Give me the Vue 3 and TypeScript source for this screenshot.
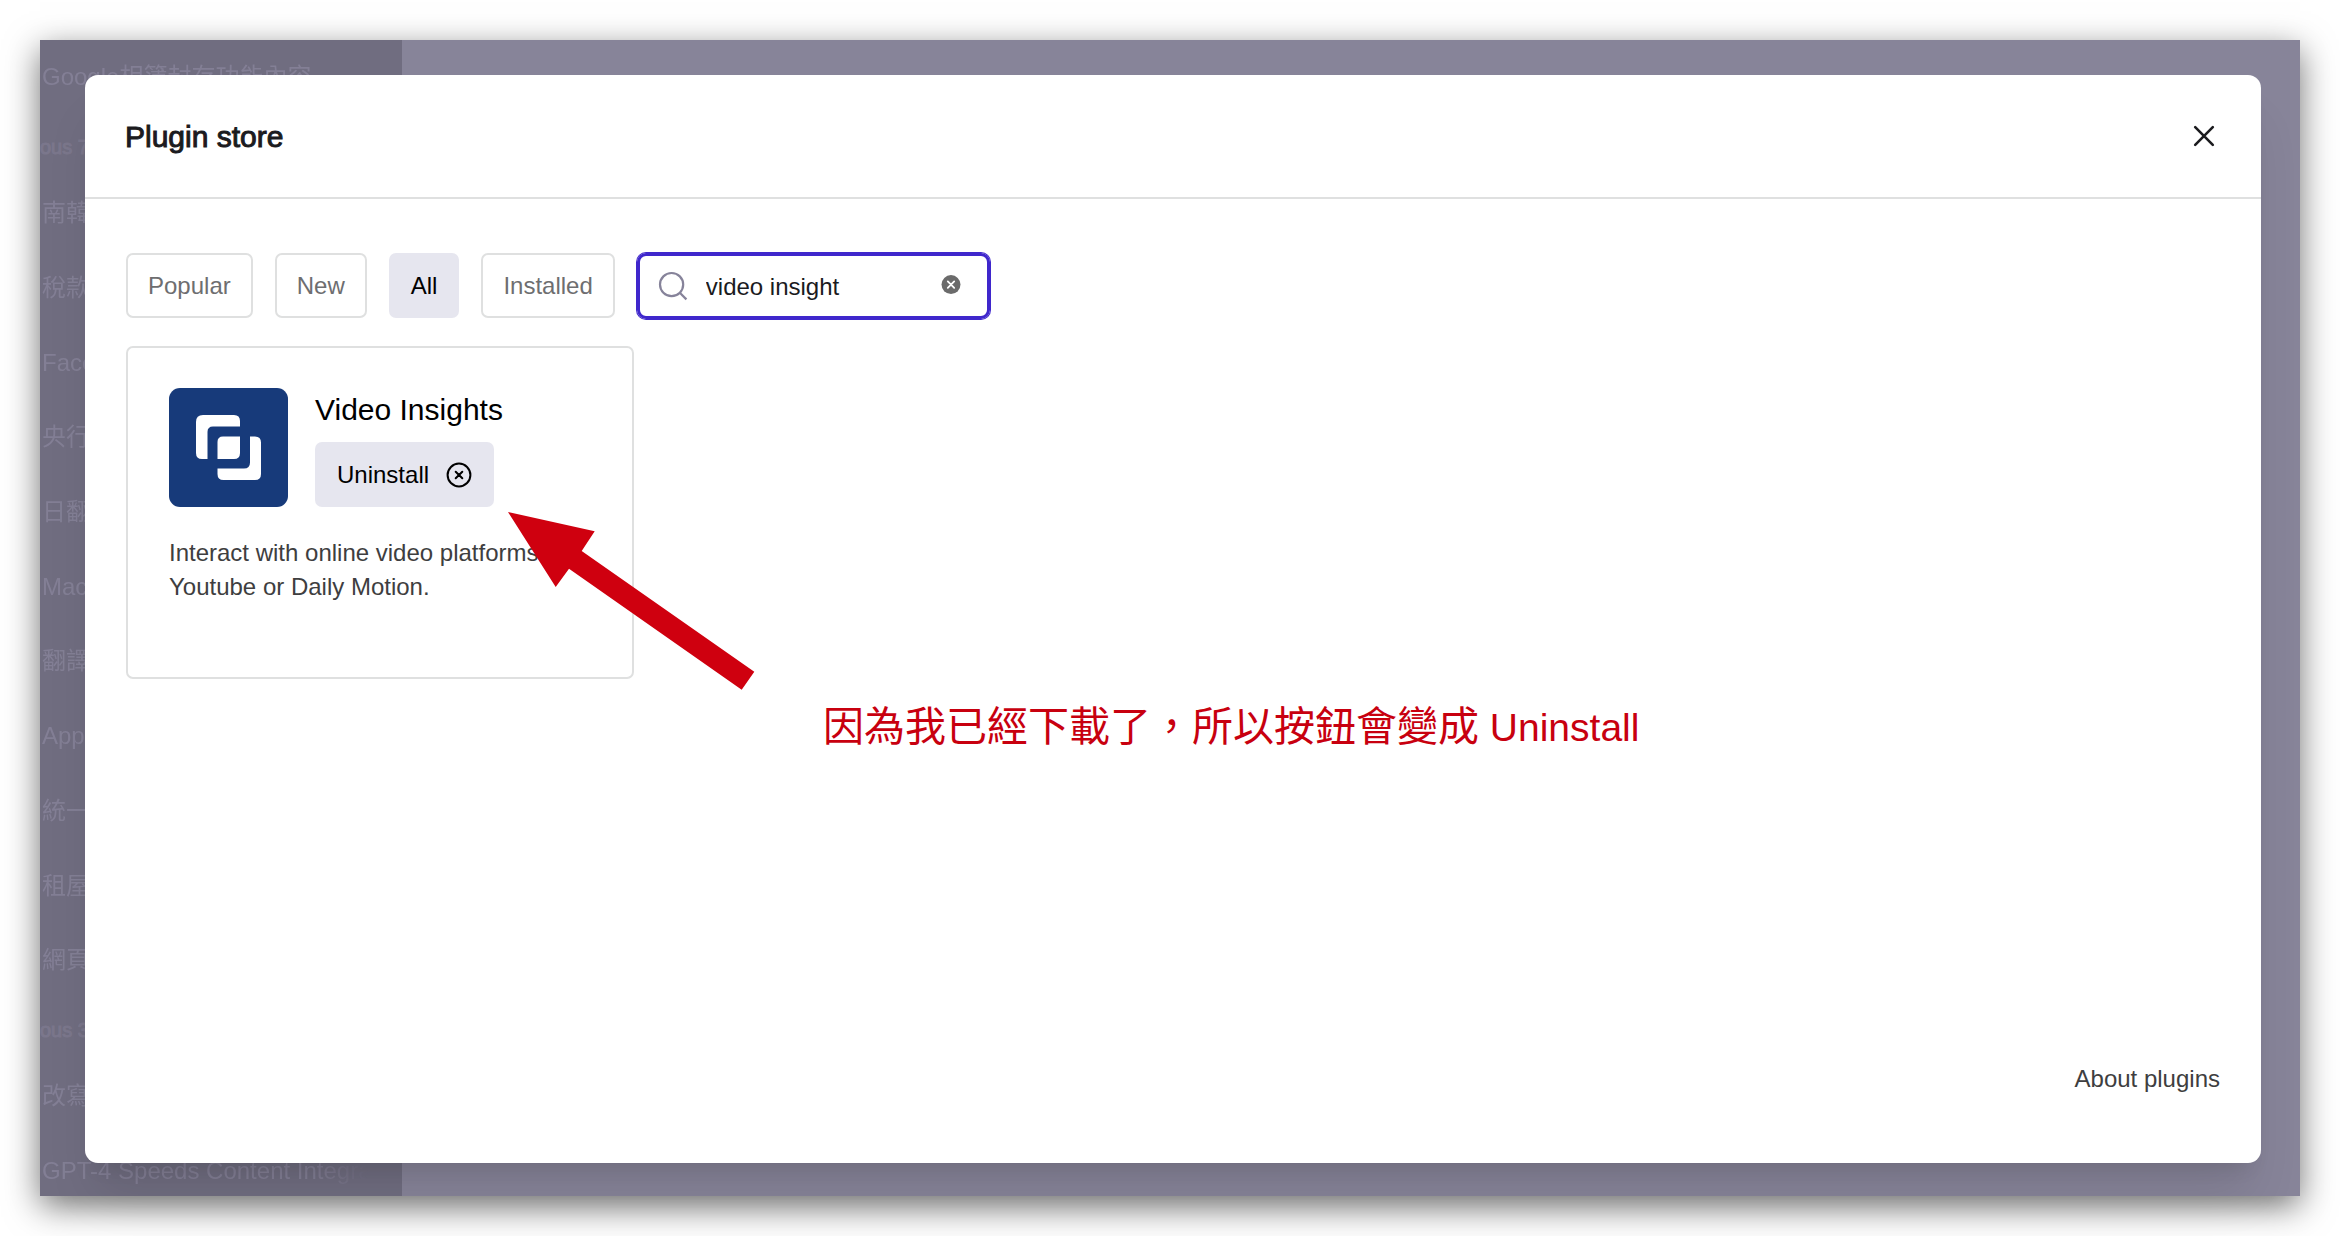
<script setup lang="ts">
import { ref } from 'vue'

interface Filter {
  id: string
  label: string
}

interface HistoryGroup {
  heading: string
  items: string[]
}

const filters: Filter[] = [
  { id: 'popular', label: 'Popular' },
  { id: 'new', label: 'New' },
  { id: 'all', label: 'All' },
  { id: 'installed', label: 'Installed' },
]

const history: HistoryGroup[] = [
  { heading: '', items: ['Google相簿封存功能內容'] },
  {
    heading: 'ous 7',
    items: ['南韓', '稅款', 'Face', '央行', '日翻', 'Mac', '翻譯', 'App', '統一', '租屋', '網頁'],
  },
  { heading: 'ous 3', items: ['改寫', 'GPT-4 Speeds Content Integra'] },
]

const active = ref('all')
const query = ref('video insight')
</script>

<template>
  <div class="stage">
    <div class="window">
      <nav class="sidebar" aria-label="History">
        <div class="history">
          <template v-for="(group, i) in history" :key="i">
            <h3 v-if="group.heading" class="group-heading">{{ group.heading }}</h3>
            <a v-for="item in group.items" :key="item" class="history-item" href="#chat">{{ item }}</a>
          </template>
        </div>
      </nav>

      <div class="overlay">
        <main class="modal" role="dialog" aria-labelledby="store-title">
          <header class="modal-header">
            <h1 id="store-title" class="modal-title">Plugin store</h1>
            <button class="icon-button" type="button" aria-label="Close">
              <svg width="32" height="32" viewBox="0 0 32 32" fill="none" stroke="#1b1b1e" stroke-width="2.6" stroke-linecap="round">
                <path d="M7.2 7.2 24.8 24.8M24.8 7.2 7.2 24.8" />
              </svg>
            </button>
          </header>

          <div class="modal-body">
            <div class="toolbar">
              <button
                v-for="f in filters"
                :key="f.id"
                type="button"
                class="filter"
                :class="{ active: active === f.id }"
                @click="active = f.id"
              >{{ f.label }}</button>

              <div class="search">
                <svg class="search-icon" width="30" height="30" viewBox="0 0 30 30" fill="none" stroke="#86839a" stroke-width="2.2">
                  <circle cx="13.6" cy="13.6" r="11.6" />
                  <path d="M21.8 21.8 28.4 28.4" />
                </svg>
                <input v-model="query" class="search-input" type="text" aria-label="Search plugins" />
                <button class="icon-button" type="button" aria-label="Clear search" @click="query = ''">
                  <svg width="20" height="22" viewBox="0 0 20 22">
                    <circle cx="10" cy="9.6" r="9.5" fill="#6b6b6b" />
                    <path d="M6.8 6.4 13.2 12.8M13.2 6.4 6.8 12.8" stroke="#fff" stroke-width="1.8" stroke-linecap="round" />
                  </svg>
                </button>
              </div>
            </div>

            <div class="cards">
              <article class="card">
                <div class="card-top">
                  <svg class="logo" width="119" height="119" viewBox="0 0 119 119" role="img" aria-label="Video Insights logo">
                    <rect width="119" height="119" rx="11" fill="#173a7a" />
                    <g fill="#fff">
                      <path d="M34 27H65Q71 27 71 33V38.500H44Q38.500 38.500 38.500 44V71H33Q27 71 27 65V34Q27 27 34 27Z" />
                      <path d="M54 48.500H71V65Q71 71 65 71H48.500V54Q48.500 48.500 54 48.500Z" />
                      <path d="M81 48.500H86Q92 48.500 92 54.500V86Q92 92 86 92H54.500Q48.500 92 48.500 86V80.500H75Q81 80.500 81 74.500Z" />
                    </g>
                  </svg>
                  <div class="card-info">
                    <h2 class="card-title">Video Insights</h2>
                    <button class="uninstall" type="button">
                      <span>Uninstall</span>
                      <svg width="26" height="26" viewBox="0 0 26 26" fill="none" stroke="#000" stroke-width="2" stroke-linecap="round">
                        <circle cx="13" cy="13" r="11.400" />
                        <path d="M9.700 9.700 16.300 16.300M16.300 9.700 9.700 16.300" />
                      </svg>
                    </button>
                  </div>
                </div>
                <p class="card-text">Interact with online video platforms like<br />Youtube or Daily Motion.</p>
              </article>
            </div>

            <footer class="modal-footer">
              <a class="about" href="#about">About plugins</a>
            </footer>
          </div>

          <svg class="arrow" width="248" height="180" viewBox="0 0 248 180" aria-hidden="true">
            <path d="M0 0 86.700 19.300 73.700 39 246.300 159.700 233.700 177.700 61 56.700 47.700 75Z" fill="#cf000f" />
          </svg>
          <p class="note">因為我已經下載了，所以按鈕會變成<span class="note-latin"> Uninstall</span></p>
        </main>
      </div>
    </div>
  </div>
</template>

<style>
body {
  margin: 0;
  background: #fff;
}
</style>

<style scoped>
.stage {
  box-sizing: border-box;
  min-height: 100vh;
  padding: 40px;
  display: grid;
  overflow: hidden;
  font-family: "Liberation Sans", "Noto Sans CJK TC", sans-serif;
  font-size: 24px;
  line-height: 34px;
  color: #000;
}

.window {
  display: grid;
  grid-template-columns: minmax(0, 1fr);
  grid-template-rows: minmax(0, 1fr);
  background: #878499;
  box-shadow: 0 10px 32px rgba(0, 0, 0, 0.56);
}

.sidebar,
.overlay {
  grid-area: 1 / 1;
}

.sidebar {
  width: 362px;
  overflow: hidden;
  background: #706d80;
}

.history {
  display: flex;
  flex-direction: column;
  height: calc(100% + 12px);
}

.group-heading {
  flex: none;
  margin: 0;
  padding-top: 3px;
  font-size: 20px;
  line-height: 58px;
  font-weight: 400;
  white-space: nowrap;
  color: #7b778c;
  -webkit-text-stroke: 1px #7b778c;
}

.history-item {
  flex: 1;
  display: flex;
  align-items: center;
  margin: 0 34px 0 2px;
  white-space: nowrap;
  text-decoration: none;
  color: #837f95;
  -webkit-mask-image: linear-gradient(to left, transparent, #000 56px);
  mask-image: linear-gradient(to left, transparent, #000 56px);
}

.overlay {
  display: grid;
  padding: 35px 39px 33px 45px;
  z-index: 1;
}

.modal {
  position: relative;
  display: flex;
  flex-direction: column;
  background: #fff;
  border-radius: 13px;
  box-shadow: 0 40px 50px -10px rgba(0, 0, 0, 0.1), 0 16px 20px -12px rgba(0, 0, 0, 0.1);
}

.modal-header {
  display: flex;
  align-items: center;
  justify-content: space-between;
  height: 122px;
  padding: 0 41px 0 40px;
  border-bottom: 2px solid #dfe0e0;
}

.modal-title {
  margin: 0;
  padding-top: 2px;
  font-size: 30px;
  font-weight: 400;
  line-height: 44px;
  color: #1b1b1e;
  -webkit-text-stroke: 1px #1b1b1e;
}

.icon-button {
  display: flex;
  padding: 0;
  border: 0;
  background: none;
  cursor: pointer;
}

.modal-body {
  flex: 1;
  display: flex;
  flex-direction: column;
  padding: 54px 41px 67px;
}

.toolbar {
  display: flex;
  gap: 22px;
}

.filter {
  height: 65px;
  padding: 1px 20px 0;
  border: 2px solid #dfe0e0;
  border-radius: 7px;
  background: #fff;
  font: inherit;
  color: #6e6e70;
  cursor: pointer;
}

.filter.active {
  border-color: #e6e6ef;
  background: #e6e6ef;
  color: #000;
}

.search {
  box-sizing: border-box;
  display: flex;
  align-items: center;
  gap: 18px;
  width: 353px;
  height: 66px;
  padding: 0 26px 0 18px;
  border: 3px solid #3f27cc;
  border-radius: 9px;
  box-shadow: 0 0 0 1px #3f27cc;
}

.search-icon {
  flex: none;
}

.search-input {
  flex: 1;
  min-width: 0;
  padding: 1px 0 0;
  border: 0;
  outline: 0;
  background: none;
  font: inherit;
  color: #1b1b1e;
}

.cards {
  display: grid;
  grid-template-columns: repeat(4, minmax(0, 1fr));
  gap: 21px;
  margin-top: 27px;
}

.card {
  box-sizing: border-box;
  min-height: 333px;
  padding: 40px 40px 40px 41px;
  border: 2px solid #dfe0e0;
  border-radius: 7px;
}

.card-top {
  display: flex;
  gap: 27px;
}

.logo {
  flex: none;
}

.card-info {
  display: flex;
  flex-direction: column;
  align-items: flex-start;
  gap: 10px;
}

.card-title {
  margin: 0;
  font-size: 30px;
  font-weight: 400;
  line-height: 44px;
}

.uninstall {
  display: flex;
  align-items: center;
  gap: 17px;
  height: 65px;
  padding: 0 22px;
  border: 0;
  border-radius: 7px;
  background: #e6e6ef;
  font: inherit;
  color: #000;
  cursor: pointer;
}

.card-text {
  margin: 29px 0 0;
  white-space: nowrap;
  color: #3e3e40;
}

.modal-footer {
  display: flex;
  justify-content: flex-end;
  margin-top: auto;
}

.about {
  color: #3e3e40;
  text-decoration: none;
}

.arrow {
  position: absolute;
  left: 423px;
  top: 437px;
}

.note {
  position: absolute;
  left: 738px;
  top: 622px;
  margin: 0;
  font-size: 41px;
  line-height: 60px;
  white-space: nowrap;
  color: #c8000f;
}

.note-latin {
  font-size: 39px;
}
</style>
